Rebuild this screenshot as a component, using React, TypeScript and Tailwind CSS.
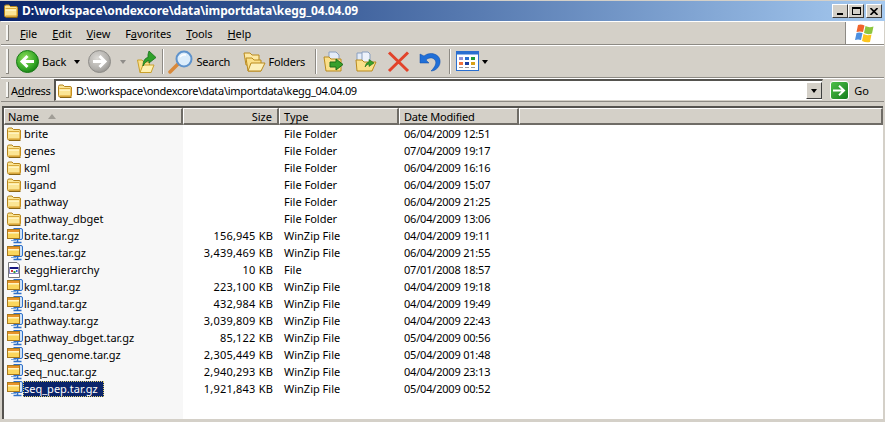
import type { ReactNode } from 'react';

const files = [
  { name: 'brite', size: '', type: 'File Folder', date: '06/04/2009 12:51', icon: 'folder' },
  { name: 'genes', size: '', type: 'File Folder', date: '07/04/2009 19:17', icon: 'folder' },
  { name: 'kgml', size: '', type: 'File Folder', date: '06/04/2009 16:16', icon: 'folder' },
  { name: 'ligand', size: '', type: 'File Folder', date: '06/04/2009 15:07', icon: 'folder' },
  { name: 'pathway', size: '', type: 'File Folder', date: '06/04/2009 21:25', icon: 'folder' },
  { name: 'pathway_dbget', size: '', type: 'File Folder', date: '06/04/2009 13:06', icon: 'folder' },
  { name: 'brite.tar.gz', size: '156,945 KB', type: 'WinZip File', date: '04/04/2009 19:11', icon: 'zip' },
  { name: 'genes.tar.gz', size: '3,439,469 KB', type: 'WinZip File', date: '06/04/2009 21:55', icon: 'zip' },
  { name: 'keggHierarchy', size: '10 KB', type: 'File', date: '07/01/2008 18:57', icon: 'file' },
  { name: 'kgml.tar.gz', size: '223,100 KB', type: 'WinZip File', date: '04/04/2009 19:18', icon: 'zip' },
  { name: 'ligand.tar.gz', size: '432,984 KB', type: 'WinZip File', date: '04/04/2009 19:49', icon: 'zip' },
  { name: 'pathway.tar.gz', size: '3,039,809 KB', type: 'WinZip File', date: '04/04/2009 22:43', icon: 'zip' },
  { name: 'pathway_dbget.tar.gz', size: '85,122 KB', type: 'WinZip File', date: '05/04/2009 00:56', icon: 'zip' },
  { name: 'seq_genome.tar.gz', size: '2,305,449 KB', type: 'WinZip File', date: '05/04/2009 01:48', icon: 'zip' },
  { name: 'seq_nuc.tar.gz', size: '2,940,293 KB', type: 'WinZip File', date: '04/04/2009 23:13', icon: 'zip' },
  { name: 'seq_pep.tar.gz', size: '1,921,843 KB', type: 'WinZip File', date: '05/04/2009 00:52', icon: 'zip', selected: true },
];

function FolderIcon() {
  return (
    <svg width="16" height="16" viewBox="0 0 16 16" className="shrink-0">
      <path d="M1.5 3.5 Q1.5 2 3 2 H6 L7.5 3.5 H13 Q14.5 3.5 14.5 5 V12.5 Q14.5 14 13 14 H3 Q1.5 14 1.5 12.5 Z" fill="#fbe594" stroke="#b5841c" />
      <path d="M2.5 5.5 H13.5" stroke="#d9a93a" />
      <path d="M2.5 6.5 H13.5 V8 H2.5 Z" fill="#fff3bf" />
      <path d="M2.5 13 H14 M14 6 V13" stroke="#d69a22" />
      <path d="M3 14.5 H14.5" stroke="#8a6514" />
    </svg>
  );
}

function ZipIcon() {
  return (
    <svg width="18" height="17" viewBox="0 0 18 17" className="shrink-0">
      <path d="M7.5 1.5 H15 Q16.5 1.5 16.5 3 V11 Q16.5 12.5 15 12.5 H7.5" fill="#cfe2f8" stroke="#2f70c8" />
      <path d="M11.5 12.5 V15 M7.5 15.5 H15.5" stroke="#2f70c8" strokeWidth="1.6" fill="none" />
      <path d="M5 13.5 H10" stroke="#7aa6dc" />
      <rect x="1.5" y="2.5" width="12" height="9" fill="#fbd65c" stroke="#a9791c" />
      <rect x="2" y="3" width="11" height="2" fill="#e8932a" />
      <rect x="2" y="5" width="11" height="1.5" fill="#fff3bf" />
    </svg>
  );
}

function DocIcon() {
  return (
    <svg width="16" height="16" viewBox="0 0 16 16" className="shrink-0">
      <path d="M2.5 0.5 H11 L13.5 3 V15.5 H2.5 Z" fill="#fff" stroke="#77777a" />
      <rect x="3.5" y="5" width="9" height="7" fill="#16167e" />
      <rect x="4" y="7" width="8" height="4.5" fill="#fff" />
      <rect x="5" y="8" width="2" height="2" fill="#d23b3b" />
      <rect x="7.5" y="9" width="2" height="2" fill="#2f9b3a" />
      <rect x="10" y="8" width="1.5" height="2" fill="#2f5fd0" />
    </svg>
  );
}

function RoundArrow({ disabled, flip }: { disabled?: boolean; flip?: boolean }) {
  const id = disabled ? 'gDis' : 'gOn';
  return (
    <svg width="23" height="23" viewBox="0 0 23 23" className="shrink-0">
      <defs>
        <radialGradient id={id} cx="40%" cy="35%" r="75%">
          <stop offset="0%" stopColor={disabled ? '#dcdad6' : '#8fe05c'} />
          <stop offset="65%" stopColor={disabled ? '#b2b0ac' : '#34a626'} />
          <stop offset="100%" stopColor={disabled ? '#8c8a86' : '#0e7010'} />
        </radialGradient>
      </defs>
      <circle cx="11.5" cy="11.5" r="11" fill={`url(#${id})`} stroke={disabled ? '#8f8d89' : '#1a7a18'} />
      <path
        d={flip ? 'M5 11.5 H16 M11.5 6 L17 11.5 L11.5 17' : 'M18 11.5 H7 M11.5 6 L6 11.5 L11.5 17'}
        fill="none"
        stroke="#fff"
        strokeWidth="3"
      />
    </svg>
  );
}

function Caret({ light }: { light?: boolean }) {
  return <span className={`w-0 h-0 border-x-[3.5px] border-x-transparent border-t-[4px] ${light ? 'border-t-[#8f8d89]' : 'border-t-black'}`} />;
}

function Grip() {
  return <div className="w-[3px] self-stretch my-[3px] ml-[5px] bg-[#f7f6f3] border-r border-b border-[#8a8780] shrink-0" />;
}

function Sep() {
  return <div className="w-[2px] h-[25px] border-l border-[#8d8a84] border-r border-r-white" />;
}

function Bar({ children, className }: { children: ReactNode; className?: string }) {
  return (
    <div className={`flex items-center border-t border-white border-b border-b-[#8d8a84] mx-[1px] shrink-0 ${className ?? ''}`}>
      {children}
    </div>
  );
}

function MenuItem({ letter, rest }: { letter: string; rest: string }) {
  return (
    <span>
      <span className="underline">{letter}</span>
      {rest}
    </span>
  );
}

function HeaderCell({ className, children }: { className: string; children?: ReactNode }) {
  return (
    <div className={`flex items-center h-[17px] border-t border-l border-white border-r-2 border-r-[#6f6c66] border-b-2 border-b-[#6f6c66] shrink-0 ${className}`}>
      {children}
    </div>
  );
}

export default function App() {
  return (
    <div className="w-[885px] h-[422px] overflow-hidden bg-[#d4d0c8] flex flex-col text-[11px] leading-none text-black font-['Noto_Sans','Liberation_Sans',sans-serif]">
      {/* title bar */}
      <div className="h-[20px] mt-[1px] shrink-0 flex items-center bg-gradient-to-r from-[#0a246a] to-[#a6caf0] px-[3px]">
        <FolderIcon />
        <span className="ml-[3px] text-white font-bold text-[12px] tracking-[-0.12px] flex-1">D:\workspace\ondexcore\data\importdata\kegg_04.04.09</span>
        <div className="flex items-center">
          <div className="w-[16px] h-[14px] bg-[#d4d0c8] border border-white border-r-[#404040] border-b-[#404040] flex items-end justify-center pb-[2px]"><div className="w-[6px] h-[2px] bg-black" /></div>
          <div className="w-[16px] h-[14px] bg-[#d4d0c8] border border-white border-r-[#404040] border-b-[#404040] flex items-center justify-center"><div className="w-[9px] h-[8px] border border-black border-t-2" /></div>
          <div className="ml-[2px] w-[16px] h-[14px] bg-[#d4d0c8] border border-white border-r-[#404040] border-b-[#404040] flex items-center justify-center">
            <svg width="8" height="7" viewBox="0 0 8 7"><path d="M0.5 0 L7.5 7 M7.5 0 L0.5 7" stroke="#000" strokeWidth="1.6" /></svg>
          </div>
        </div>
      </div>

      {/* menu bar */}
      <Bar className="h-[24px]">
        <Grip />
        <div className="flex items-center gap-[15px] ml-[11px] tracking-[-0.1px]">
          <MenuItem letter="F" rest="ile" />
          <MenuItem letter="E" rest="dit" />
          <MenuItem letter="V" rest="iew" />
          <span>F<span className="underline">a</span>vorites</span>
          <MenuItem letter="T" rest="ools" />
          <MenuItem letter="H" rest="elp" />
        </div>
        <div className="ml-auto w-[39px] self-stretch bg-white border-l border-[#8d8a84] flex items-center justify-center">
          <svg width="20" height="19" viewBox="0 0 20 19">
            <path d="M3 1 Q6 0 9.5 1.5 L8 8 Q5 7 1.5 8 Z" fill="#f0642c" />
            <path d="M10.5 2 Q14 4 18.5 2.5 L17 9.5 Q13 11 9 9 Z" fill="#8cc63e" />
            <path d="M1.5 9 Q4 8 7.5 9 L6 16 Q3 15 0 16 Z" fill="#4d90e0" />
            <path d="M8.5 10 Q12 12 16.5 10.5 L15 18 Q11 19 7 17 Z" fill="#fcc51e" />
          </svg>
        </div>
      </Bar>

      {/* standard buttons */}
      <Bar className="h-[33px]">
        <Grip />
        <div className="flex items-center ml-[7px]">
          <RoundArrow />
          <span className="ml-[3px]">Back</span>
          <span className="ml-[8px] flex"><Caret /></span>
          <span className="ml-[8px] flex"><RoundArrow disabled flip /></span>
          <span className="ml-[9px] flex"><Caret light /></span>
          <svg width="22" height="24" viewBox="0 0 22 24" className="ml-[10px]">
            <path d="M1.5 10 H6 L8 12 H13 L15 22.5 H4 Z" fill="#fbe08a" stroke="#c9a02c" />
            <path d="M4 22.5 L7 15 H18 L15 22.5 Z" fill="#fff0b0" stroke="#c9a02c" />
            <path d="M7 16 C7 11 9 8 12 7.5 V4.5 L13 1 L20 7.5 L13 13 V10.5 C10.5 11 8.5 13 7 16 Z" fill="#2fa12a" stroke="#17701a" strokeWidth="0.8" />
          </svg>
          <div className="ml-[4px]"><Sep /></div>
          <svg width="26" height="24" viewBox="0 0 26 24" className="ml-[4px]">
            <path d="M2 22 L10 14" stroke="#d9893a" strokeWidth="3.5" strokeLinecap="round" />
            <circle cx="16" cy="9" r="7.5" fill="#dcedfb" stroke="#5f93cc" strokeWidth="2" />
            <path d="M12 7 Q14 4 18 5" stroke="#fff" strokeWidth="1.5" fill="none" />
          </svg>
          <span className="ml-[2px] w-[33px] tracking-[-0.2px]">Search</span>
          <svg width="24" height="22" viewBox="0 0 24 22" className="ml-[13px]">
            <path d="M2 2 H8 L10 4 H17 V14 H4 Z" fill="#fde9a6" stroke="#b98a1e" />
            <path d="M4 7 H10 L12 9 H19 V20 H6 Z" fill="#fbe08a" stroke="#b98a1e" />
            <path d="M6 20 L9 12 H23 L19 20 Z" fill="#fdf0bb" stroke="#b98a1e" />
          </svg>
          <span className="ml-[2px] w-[35px] tracking-[-0.2px]">Folders</span>
          <div className="ml-[12px]"><Sep /></div>
          <svg width="22" height="22" viewBox="0 0 22 22" className="ml-[6px]">
            <path d="M6 1 H13 L16 4 V12 H6 Z" fill="#e4ecf8" stroke="#8aa0c0" />
            <path d="M1 6 H6 L8 8 H18 V20 H3 Z" fill="#fbe08a" stroke="#b98a1e" />
            <path d="M7 11 H13 V8 L20 13.5 L13 19 V16 H7 Z" fill="#38a02c" stroke="#1c6e18" />
          </svg>
          <svg width="24" height="22" viewBox="0 0 24 22" className="ml-[9px]">
            <path d="M3 2 H9 V14 H3 Z" fill="#e4ecf8" stroke="#8aa0c0" />
            <path d="M8 1 H14 L16 3 V15 H8 Z" fill="#eef3fb" stroke="#8aa0c0" />
            <path d="M2 9 H8 L10 11 H22 L18 20 H3 Z" fill="#fbe08a" stroke="#b98a1e" />
            <path d="M11 16 Q12 11 15 11 V8.5 L20 12 L15 15.5 V13 Q13 13 11 16 Z" fill="#38a02c" stroke="#1c6e18" strokeWidth="0.6" />
          </svg>
          <svg width="23" height="22" viewBox="0 0 23 22" className="ml-[9px]">
            <path d="M2 1.5 L21 20 M21 1.5 L2 20" stroke="#e2432a" strokeWidth="3" />
          </svg>
          <svg width="24" height="22" viewBox="0 0 24 22" className="ml-[8px]">
            <path d="M2 3 V12 H11 L8 9 C10 6.5 15 6 17 9 C19 12 17 16 13 20 C18 20 23 15 22 9 C21 3 12 0 6 5 Z" fill="#1f6fd8" stroke="#0d4aa6" strokeWidth="0.5" />
          </svg>
          <div className="ml-[7px]"><Sep /></div>
          <svg width="23" height="21" viewBox="0 0 23 21" className="ml-[5px]">
            <rect x="0.5" y="0.5" width="22" height="19" fill="#fff" stroke="#2a6fd0" />
            <rect x="0.5" y="0.5" width="22" height="3" fill="#2a6fd0" />
            <rect x="3" y="6" width="4" height="3" fill="#8f8fd8" /><rect x="9" y="6" width="4" height="3" fill="#2a6fd0" /><rect x="15" y="6" width="4" height="3" fill="#1c9a3c" />
            <rect x="3" y="11" width="4" height="3" fill="#f0703c" /><rect x="9" y="11" width="4" height="3" fill="#1c3fa0" /><rect x="15" y="11" width="4" height="3" fill="#d8a018" />
            <path d="M3 16.5 H7 M9 16.5 H13 M15 16.5 H19" stroke="#999" />
          </svg>
          <span className="ml-[3px] flex"><Caret /></span>
        </div>
      </Bar>

      {/* address bar */}
      <Bar className="h-[24px]">
        <Grip />
        <span className="ml-[2px] w-[39px] tracking-[-0.3px]">A<span className="underline">d</span>dress</span>
        <div className="ml-[4px] flex-1 h-[22px] bg-white border-t-2 border-l-2 border-[#55534f] border-b border-r border-b-[#d4d0c8] border-r-[#d4d0c8] flex items-center pl-[1px]">
          <FolderIcon />
          <span className="ml-[3px] flex-1 tracking-[-0.3px]">D:\workspace\ondexcore\data\importdata\kegg_04.04.09</span>
          <div className="w-[16px] h-[17px] bg-[#d4d0c8] border border-white border-r-[#404040] border-b-[#404040] flex items-center justify-center">
            <Caret />
          </div>
        </div>
        <div className="w-[19px] h-[19px] ml-[7px] rounded-[3px] bg-gradient-to-br from-[#4fc04a] to-[#0f7d1c] border border-white flex items-center justify-center">
          <svg width="13" height="11" viewBox="0 0 13 11"><path d="M0 5.5 H10 M6 0.8 L11 5.5 L6 10.2" fill="none" stroke="#fff" strokeWidth="2" /></svg>
        </div>
        <span className="ml-[5px] mr-[15px]">Go</span>
      </Bar>

      {/* details list */}
      <div className="mt-[4px] mx-[2px] flex-1 min-h-0 bg-white border-t-2 border-l-2 border-[#55534f] flex flex-col">
        <div className="flex bg-[#d4d0c8] shrink-0">
          <HeaderCell className="w-[179px] pl-[3px]">
            Name
            <span className="ml-[9px] w-0 h-0 border-x-[4px] border-x-transparent border-b-[5px] border-b-[#a09d96]" />
          </HeaderCell>
          <HeaderCell className="w-[96px] justify-end pr-[5px]">Size</HeaderCell>
          <HeaderCell className="w-[120px] pl-[4px]">Type</HeaderCell>
          <HeaderCell className="w-[120px] pl-[4px] tracking-[-0.2px]">Date Modified</HeaderCell>
          <HeaderCell className="flex-1" />
        </div>
        <div className="flex-1 flex min-h-0">
          <div className="w-[179px] bg-[#f7f7f7] flex flex-col pl-[2px]">
            {files.map((f) => (
              <div key={f.name} className="h-[17px] flex items-center">
                <span className="w-[17px] flex">
                  {f.icon === 'folder' ? <FolderIcon /> : f.icon === 'zip' ? <ZipIcon /> : <DocIcon />}
                </span>
                <span className={f.selected ? 'bg-[#0a246a] text-white pl-[1px] pr-[6px] h-[16px] flex items-center outline-1 outline-dotted outline-[#e0d070] -outline-offset-1' : 'px-[1px]'}>{f.name}</span>
              </div>
            ))}
          </div>
          <div className="w-[90px] flex flex-col tracking-[0.2px]">
            {files.map((f) => (
              <div key={f.name} className="h-[17px] flex items-center justify-end">{f.size}</div>
            ))}
          </div>
          <div className="w-[122px] pl-[11px] flex flex-col">
            {files.map((f) => (
              <div key={f.name} className="h-[17px] flex items-center">{f.type}</div>
            ))}
          </div>
          <div className="pl-[9px] flex flex-col tracking-[-0.2px]">
            {files.map((f) => (
              <div key={f.name} className="h-[17px] flex items-center">{f.date}</div>
            ))}
          </div>
        </div>
        <div className="h-[3px] bg-[#d4d0c8] -ml-[2px] -mr-[2px] shrink-0" />
      </div>
    </div>
  );
}
